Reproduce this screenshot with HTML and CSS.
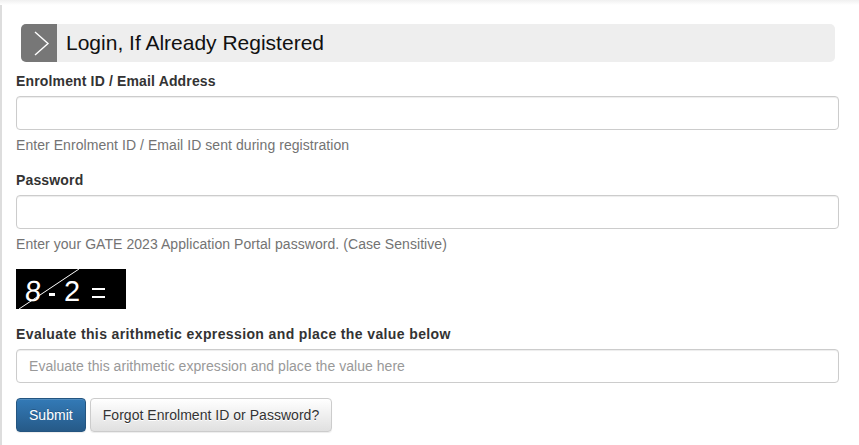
FILE: index.html
```html
<!DOCTYPE html>
<html>
<head>
<meta charset="utf-8">
<link rel="stylesheet" href="styles.css">
</head>
<body>
<div class="topshade"></div>
<div class="page">
  <div class="panel-head">
    <span class="chev"><svg width="36" height="38" viewBox="0 0 36 38"><polyline points="14,8 27,19.5 14,31" fill="none" stroke="#fff" stroke-width="1.4"/></svg></span>
    <h3 class="title">Login, If Already Registered</h3>
  </div>
  <form class="form">
    <div class="group">
      <label class="lbl">Enrolment ID / Email Address</label>
      <input class="ctl" type="text">
      <p class="help">Enter Enrolment ID / Email ID sent during registration</p>
    </div>
    <div class="group">
      <label class="lbl">Password</label>
      <input class="ctl" type="password">
      <p class="help">Enter your GATE 2023 Application Portal password. (Case Sensitive)</p>
    </div>
    <div class="group captcha-group">
      <svg class="captcha" width="110" height="40" viewBox="0 0 110 40">
        <rect width="110" height="40" fill="#000"/>
        <text x="8" y="32" fill="#fff" font-family="Liberation Sans, sans-serif" font-size="29" transform="skewX(-5) translate(3,0)">8</text>
        <rect x="33" y="24" width="6" height="3" fill="#fff"/>
        <text x="48" y="32" fill="#fff" font-family="Liberation Sans, sans-serif" font-size="29">2</text>
        <rect x="76" y="19" width="13" height="2" fill="#fff"/>
        <rect x="76" y="27" width="13" height="2" fill="#fff"/>
        <line x1="3" y1="40" x2="63" y2="0" stroke="#fff" stroke-width="1"/>
      </svg>
    </div>
    <div class="group">
      <label class="lbl lbl-wide">Evaluate this arithmetic expression and place the value below</label>
      <input class="ctl" type="text" placeholder="Evaluate this arithmetic expression and place the value here">
    </div>
    <div class="actions">
      <button type="button" class="btn btn-primary">Submit</button>
      <button type="button" class="btn btn-default">Forgot Enrolment ID or Password?</button>
    </div>
  </form>
</div>
</body>
</html>
```

FILE: styles.css
```css
* { box-sizing: border-box; }
html, body {
  margin: 0;
  padding: 0;
  background: #fff;
  font-family: "Liberation Sans", Arial, sans-serif;
  font-size: 14px;
  line-height: 20px;
  color: #333;
}
.topshade {
  height: 5px;
  background: linear-gradient(to bottom, #f0f0f0, #fff);
}
.page {
  border-left: 2px solid #ddd;
  margin-left: 0;
  padding: 19px 20px 13px 14px;
  min-height: 440px;
  letter-spacing: 0.06px;
}
.panel-head {
  display: flex;
  align-items: center;
  height: 38px;
  margin: 0 4px 9px 5px;
  background: #eeeeee;
  border-radius: 5px;
  overflow: hidden;
}
.chev {
  display: flex;
  width: 36px;
  height: 38px;
  background: #777;
}
.title {
  margin: 0 0 0 9px;
  font-size: 21px;
  font-weight: normal;
  color: #111;
  line-height: 38px;
  letter-spacing: 0;
}
.form { margin: 0; }
.group { margin-bottom: 15px; }
.lbl {
  display: block;
  font-weight: bold;
  margin-bottom: 5px;
  color: #333;
  letter-spacing: 0.15px;
}
.lbl-wide { letter-spacing: 0.38px; }
.ctl {
  display: block;
  width: 100%;
  height: 34px;
  padding: 6px 12px;
  font-family: inherit;
  font-size: 14px;
  letter-spacing: 0.04px;
  color: #555;
  background: #fff;
  border: 1px solid #ccc;
  border-radius: 4px;
  box-shadow: inset 0 1px 1px rgba(0,0,0,0.075);
}
.ctl::placeholder { color: #999; }
.help {
  margin: 5px 0 10px;
  color: #737373;
}
.captcha-group { margin-bottom: 15px; line-height: 0; }
.captcha { display: block; }
.actions { display: flex; gap: 4px; }
.btn {
  height: 34px;
  padding: 6px 12px;
  font-family: inherit;
  font-size: 14px;
  line-height: 20px;
  letter-spacing: 0.03px;
  border-radius: 4px;
  border: 1px solid;
  cursor: pointer;
}
.btn-primary {
  color: #fff;
  background: linear-gradient(to bottom, #337ab7 0, #265a88 100%);
  border-color: #245580;
  text-shadow: 0 -1px 0 rgba(0,0,0,0.2);
  box-shadow: inset 0 1px 0 rgba(255,255,255,0.15), 0 1px 1px rgba(0,0,0,0.075);
}
.btn-default {
  color: #333;
  background: linear-gradient(to bottom, #fff 0, #e0e0e0 100%);
  border-color: #ccc;
  text-shadow: 0 1px 0 #fff;
  box-shadow: inset 0 1px 0 rgba(255,255,255,0.15), 0 1px 1px rgba(0,0,0,0.075);
}
```
